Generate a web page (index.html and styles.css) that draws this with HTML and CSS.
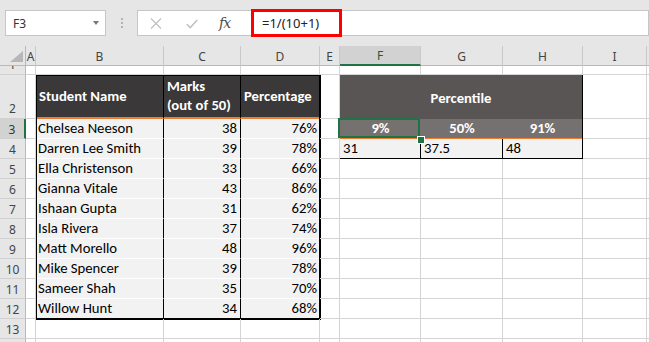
FILE: index.html
```html
<!DOCTYPE html>
<html>
<head>
<meta charset="utf-8">
<link rel="stylesheet" href="styles.css">
</head>
<body>
<div class="topbar">
  <div class="namebox"><span>F3</span><span class="nb-arrow"></span></div>
  <div class="grip"><i></i><i></i><i></i></div>
  <div class="fxbox">
    <svg class="ic-x" width="12" height="11" viewBox="0 0 12 11"><path d="M1 0.5L11 10.5M11 0.5L1 10.5" stroke="#c2c2c2" stroke-width="1.3" fill="none"/></svg>
    <svg class="ic-check" width="12" height="10" viewBox="0 0 12 10"><path d="M0.8 5.2L4.3 8.6L11.2 1" stroke="#c2c2c2" stroke-width="1.6" fill="none"/></svg>
    <span class="fx">fx</span>
  </div>
  <div class="formula"><div class="hl">=1/(10+1)</div></div>
</div>

<div class="sheet">
  <!-- column headers -->
  <div class="ch corner"><span class="tri"></span></div>
  <div class="ch">A</div><div class="ch">B</div><div class="ch">C</div><div class="ch">D</div><div class="ch">E</div>
  <div class="ch sel">F</div><div class="ch">G</div><div class="ch">H</div><div class="ch">I</div><div class="ch rest"></div>

  <!-- student table B2:D12 -->
  <div class="st">
    <div class="sh">Student Name</div>
    <div class="sh">Marks<br>(out of 50)</div>
    <div class="sh last">Percentage</div>
    <div class="sd">Chelsea Neeson</div><div class="sd num">38</div><div class="sd num last">76%</div>
    <div class="sd">Darren Lee Smith</div><div class="sd num">39</div><div class="sd num last">78%</div>
    <div class="sd">Ella Christenson</div><div class="sd num">33</div><div class="sd num last">66%</div>
    <div class="sd">Gianna Vitale</div><div class="sd num">43</div><div class="sd num last">86%</div>
    <div class="sd">Ishaan Gupta</div><div class="sd num">31</div><div class="sd num last">62%</div>
    <div class="sd">Isla Rivera</div><div class="sd num">37</div><div class="sd num last">74%</div>
    <div class="sd">Matt Morello</div><div class="sd num">48</div><div class="sd num last">96%</div>
    <div class="sd">Mike Spencer</div><div class="sd num">39</div><div class="sd num last">78%</div>
    <div class="sd">Sameer Shah</div><div class="sd num">35</div><div class="sd num last">70%</div>
    <div class="sd">Willow Hunt</div><div class="sd num">34</div><div class="sd num last">68%</div>
  </div>

  <!-- percentile table F2:H4 -->
  <div class="pct">
    <div class="ph">Percentile</div>
    <div class="pk active">9%</div><div class="pk">50%</div><div class="pk">91%</div>
    <div class="pv">31</div><div class="pv">37.5</div><div class="pv last">48</div>
  </div>

  <!-- row 1 -->
  <div class="rh r1"><span>1</span></div>
  <div class="c"></div><div class="c"></div><div class="c"></div><div class="c"></div><div class="c"></div>
  <div class="c"></div><div class="c"></div><div class="c"></div><div class="c"></div><div class="c rest"></div>
  <!-- row 2 -->
  <div class="rh r2">2</div>
  <div class="c"></div><div class="c"></div><div class="c"></div><div class="c rest"></div>
  <!-- row 3 -->
  <div class="rh sel">3</div>
  <div class="c"></div><div class="c"></div><div class="c"></div><div class="c rest"></div>
  <!-- row 4 -->
  <div class="rh">4</div>
  <div class="c"></div><div class="c"></div><div class="c"></div><div class="c rest"></div>
  <!-- rows 5-12 -->
  <div class="rh">5</div><div class="c"></div><div class="c"></div><div class="c"></div><div class="c"></div><div class="c"></div><div class="c"></div><div class="c rest"></div>
  <div class="rh">6</div><div class="c"></div><div class="c"></div><div class="c"></div><div class="c"></div><div class="c"></div><div class="c"></div><div class="c rest"></div>
  <div class="rh">7</div><div class="c"></div><div class="c"></div><div class="c"></div><div class="c"></div><div class="c"></div><div class="c"></div><div class="c rest"></div>
  <div class="rh">8</div><div class="c"></div><div class="c"></div><div class="c"></div><div class="c"></div><div class="c"></div><div class="c"></div><div class="c rest"></div>
  <div class="rh">9</div><div class="c"></div><div class="c"></div><div class="c"></div><div class="c"></div><div class="c"></div><div class="c"></div><div class="c rest"></div>
  <div class="rh">10</div><div class="c"></div><div class="c"></div><div class="c"></div><div class="c"></div><div class="c"></div><div class="c"></div><div class="c rest"></div>
  <div class="rh">11</div><div class="c"></div><div class="c"></div><div class="c"></div><div class="c"></div><div class="c"></div><div class="c"></div><div class="c rest"></div>
  <div class="rh">12</div><div class="c"></div><div class="c"></div><div class="c"></div><div class="c"></div><div class="c"></div><div class="c"></div><div class="c rest"></div>
  <!-- row 13 -->
  <div class="rh">13</div>
  <div class="c"></div><div class="c"></div><div class="c"></div><div class="c"></div><div class="c"></div>
  <div class="c"></div><div class="c"></div><div class="c"></div><div class="c"></div><div class="c rest"></div>
  <!-- row 14 -->
  <div class="rh"></div>
  <div class="c"></div><div class="c"></div><div class="c"></div><div class="c"></div><div class="c"></div>
  <div class="c"></div><div class="c"></div><div class="c"></div><div class="c"></div><div class="c rest"></div>
</div>
</body>
</html>
```

FILE: styles.css
```css
* { box-sizing: border-box; margin: 0; padding: 0; }
html, body { width: 649px; height: 342px; overflow: hidden; background: #fff; }
body { font-family: "Noto Sans", "Segoe UI", "DejaVu Sans", sans-serif; color: #000; }

/* formula bar */
.topbar { height: 46px; background: #e6e6e6; display: flex; align-items: flex-start; padding-top: 10px; }
.namebox { margin-left: 5px; width: 101px; height: 26px; background: #fff; border: 1px solid #c6c6c6;
  display: flex; align-items: center; justify-content: space-between; padding: 0 6px 0 7px;
  font-size: 12px; color: #333; }
.nb-arrow { width: 0; height: 0; border-left: 3.5px solid transparent; border-right: 3.5px solid transparent; border-top: 4px solid #777; }
.grip { width: 31px; height: 26px; display: flex; flex-direction: column; align-items: center; justify-content: center; gap: 2px; padding-left: 1px; }
.grip i { display: block; width: 2px; height: 2px; background: #b3b3b3; }
.fxbox { width: 113px; height: 26px; background: #fff; border: 1px solid #c6c6c6; border-right: none;
  display: flex; align-items: center; padding-left: 12px; }
.ic-x { margin-top: 1px; }
.ic-check { margin-left: 24px; margin-top: 2px; }
.fx { margin-left: 21px; font-family: "DejaVu Serif", "Liberation Serif", serif; font-style: italic; font-size: 14px; color: #4d4d4d; letter-spacing: -1px; }
.formula { flex: 1; height: 26px; background: #fff; border: 1px solid #c6c6c6; border-left: none; display: flex; align-items: flex-start; }
.hl { margin-top: -2px; margin-left: 1px; width: 91px; height: 28px; border: 3px solid #f00; padding-left: 8px;
  font-size: 13px; color: #222; display: flex; align-items: center; }

/* sheet grid */
.sheet { display: grid;
  grid-template-columns: 26px 10px 128px 77px 79px 20px 81px 82px 80px 64px 1fr;
  grid-template-rows: 20px 9px 44px repeat(11, 20px) 20px; }
.c { border-right: 1px solid #d4d4d4; border-bottom: 1px solid #d4d4d4; }
.c.rest { border-right: none; }
.ch { background: #e6e6e6; border-right: 1px solid #c9c9c9; border-bottom: 1px solid #b9b9b9;
  font-size: 12px; color: #444; display: flex; align-items: center; justify-content: center; padding-top: 1px; }
.ch.rest { border-right: none; }
.ch.sel { background: #d2d2d2; border-bottom: 2px solid #217346; color: #1e5a36; }
.corner { justify-content: flex-end; align-items: flex-end; padding: 0 2px 3px 0; border-right-color: #b9b9b9; }
.tri { width: 0; height: 0; border-left: 13px solid transparent; border-bottom: 11px solid #b7b7b7; }

.rh { background: #e6e6e6; border-right: 1px solid #b9b9b9; border-bottom: 1px solid #d0d0d0;
  font-size: 12px; color: #444; display: flex; justify-content: center; align-items: center; line-height: 19px; overflow: hidden; padding-top: 1px; }
.rh.r1 { align-items: flex-start; padding-top: 0; }
.rh.r1 span { display: block; line-height: 20px; margin-top: -11px; }
.rh.r2 { align-items: flex-end; padding-bottom: 0; }
.rh.sel { background: #d2d2d2; border-right: 2px solid #217346; color: #333; }

/* student table */
.st { grid-column: 3 / 6; grid-row: 3 / 14; outline: 2px solid #000; outline-offset: -1px;
  display: grid; grid-template-columns: 128px 77px 1fr; grid-template-rows: 44px repeat(10, 20px);
  font-family: "Carlito", "Lato", "Liberation Sans", sans-serif; font-size: 14.7px; }
.sh { background: #3a3838; color: #fff; font-weight: bold; border-right: 1px solid #000; border-bottom: 2px solid #ed7d31;
  display: flex; align-items: center; padding: 0 2px 0 3px; line-height: 19px; }
.sd { background: #f2f2f2; border-right: 1px solid #000; border-bottom: 1px solid #fff;
  display: flex; align-items: center; padding: 0 2px 0 2px; line-height: 19px; white-space: nowrap; }
.sh.last, .sd.last { border-right: none; }
.sd.num { justify-content: flex-end; padding-right: 3px; }

/* percentile table */
.pct { grid-column: 7 / 10; grid-row: 3 / 6; margin: -1px 0 0 -1px; border: 1px solid #000;
  display: grid; grid-template-columns: 81px 82px 1fr; grid-template-rows: 44px 20px 1fr;
  font-family: "Carlito", "Lato", "Liberation Sans", sans-serif; font-size: 14.7px; }
.ph { grid-column: 1 / 4; background: #595555; color: #fff; font-weight: bold;
  display: flex; align-items: center; justify-content: center; padding-top: 1px; }
.pk { background: #767171; color: #fff; font-weight: bold; border-bottom: 1px solid #ed7d31;
  display: flex; align-items: center; justify-content: center; line-height: 19px; }
.pk.active { position: relative; }
.pk.active::before { content: ""; position: absolute; left: -2px; top: -1px; right: 1px; bottom: 0; border: 2px solid #217346; }
.pk.active::after { content: ""; position: absolute; left: 77px; top: 17px; width: 6px; height: 6px; background: #217346; border: 1px solid #fff; z-index: 2; }
.pv { background: #f2f2f2; border-right: 1px solid #000; display: flex; align-items: center; padding-left: 3px; line-height: 19px; }
.pv.last { border-right: none; }
```
